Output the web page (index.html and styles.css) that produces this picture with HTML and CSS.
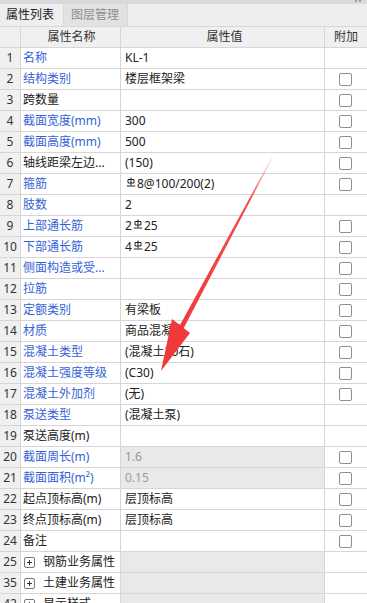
FILE: index.html
```html
<!DOCTYPE html>
<html lang="zh-CN">

<head>
    <meta charset="UTF-8">
    <title>属性列表</title>
    <link rel="stylesheet" href="styles.css">
</head>

<body>

    <div class="top-strip"><span class="grip"></span></div>

    <div class="tabs">
        <div class="tab active">属性列表</div>
        <div class="tab">图层管理</div>
    </div>

    <div class="grid">
        <div class="row head">
            <div class="cell idx"></div>
            <div class="cell name center">属性名称</div>
            <div class="cell value center">属性值</div>
            <div class="cell add center">附加</div>
        </div>

        <div class="row"><div class="cell idx">1</div><div class="cell name blue">名称</div><div class="cell value">KL-1</div><div class="cell add"></div></div>
        <div class="row"><div class="cell idx">2</div><div class="cell name blue">结构类别</div><div class="cell value">楼层框架梁</div><div class="cell add"><span class="check"></span></div></div>
        <div class="row"><div class="cell idx">3</div><div class="cell name">跨数量</div><div class="cell value"></div><div class="cell add"><span class="check"></span></div></div>
        <div class="row"><div class="cell idx">4</div><div class="cell name blue">截面宽度(mm)</div><div class="cell value">300</div><div class="cell add"><span class="check"></span></div></div>
        <div class="row"><div class="cell idx">5</div><div class="cell name blue">截面高度(mm)</div><div class="cell value">500</div><div class="cell add"><span class="check"></span></div></div>
        <div class="row"><div class="cell idx">6</div><div class="cell name">轴线距梁左边...</div><div class="cell value">(150)</div><div class="cell add"><span class="check"></span></div></div>
        <div class="row"><div class="cell idx">7</div><div class="cell name blue">箍筋</div><div class="cell value"><svg class="bar" viewBox="0 0 10 10"><path d="M5 0.5V8.5M2 2.5h6v3.5h-6zM0.8 9h8.4"/></svg>8@100/200(2)</div><div class="cell add"><span class="check"></span></div></div>
        <div class="row"><div class="cell idx">8</div><div class="cell name blue">肢数</div><div class="cell value">2</div><div class="cell add"></div></div>
        <div class="row"><div class="cell idx">9</div><div class="cell name blue">上部通长筋</div><div class="cell value">2<svg class="bar" viewBox="0 0 10 10"><path d="M5 0.5V8.5M2 2.5h6v3.5h-6zM0.8 9h8.4"/></svg>25</div><div class="cell add"><span class="check"></span></div></div>
        <div class="row"><div class="cell idx">10</div><div class="cell name blue">下部通长筋</div><div class="cell value">4<svg class="bar" viewBox="0 0 10 10"><path d="M5 0.5V8.5M2 2.5h6v3.5h-6zM0.8 9h8.4"/></svg>25</div><div class="cell add"><span class="check"></span></div></div>
        <div class="row"><div class="cell idx">11</div><div class="cell name blue">侧面构造或受...</div><div class="cell value"></div><div class="cell add"><span class="check"></span></div></div>
        <div class="row"><div class="cell idx">12</div><div class="cell name blue">拉筋</div><div class="cell value"></div><div class="cell add"><span class="check"></span></div></div>
        <div class="row"><div class="cell idx">13</div><div class="cell name blue">定额类别</div><div class="cell value">有梁板</div><div class="cell add"><span class="check"></span></div></div>
        <div class="row"><div class="cell idx">14</div><div class="cell name blue">材质</div><div class="cell value">商品混凝土</div><div class="cell add"><span class="check"></span></div></div>
        <div class="row"><div class="cell idx">15</div><div class="cell name blue">混凝土类型</div><div class="cell value">(混凝土20石)</div><div class="cell add"><span class="check"></span></div></div>
        <div class="row"><div class="cell idx">16</div><div class="cell name blue">混凝土强度等级</div><div class="cell value">(C30)</div><div class="cell add"><span class="check"></span></div></div>
        <div class="row"><div class="cell idx">17</div><div class="cell name blue">混凝土外加剂</div><div class="cell value">(无)</div><div class="cell add"><span class="check"></span></div></div>
        <div class="row"><div class="cell idx">18</div><div class="cell name blue">泵送类型</div><div class="cell value">(混凝土泵)</div><div class="cell add"></div></div>
        <div class="row"><div class="cell idx">19</div><div class="cell name">泵送高度(m)</div><div class="cell value"></div><div class="cell add"></div></div>
        <div class="row"><div class="cell idx">20</div><div class="cell name blue">截面周长(m)</div><div class="cell value locked">1.6</div><div class="cell add"><span class="check"></span></div></div>
        <div class="row"><div class="cell idx">21</div><div class="cell name blue">截面面积(m²)</div><div class="cell value locked">0.15</div><div class="cell add"><span class="check"></span></div></div>
        <div class="row"><div class="cell idx">22</div><div class="cell name">起点顶标高(m)</div><div class="cell value">层顶标高</div><div class="cell add"><span class="check"></span></div></div>
        <div class="row"><div class="cell idx">23</div><div class="cell name">终点顶标高(m)</div><div class="cell value">层顶标高</div><div class="cell add"><span class="check"></span></div></div>
        <div class="row"><div class="cell idx">24</div><div class="cell name">备注</div><div class="cell value"></div><div class="cell add"><span class="check"></span></div></div>
        <div class="row"><div class="cell idx">25</div><div class="cell name"><span class="plus"></span>钢筋业务属性</div><div class="cell value locked"></div><div class="cell add"></div></div>
        <div class="row"><div class="cell idx">35</div><div class="cell name"><span class="plus"></span>土建业务属性</div><div class="cell value locked"></div><div class="cell add"></div></div>
        <div class="row"><div class="cell idx">42</div><div class="cell name"><span class="plus"></span>显示样式</div><div class="cell value locked"></div><div class="cell add"></div></div>
    </div>

    <!-- annotation arrow drawn over the grid -->
    <svg class="arrow" width="367" height="603" viewBox="0 0 367 603">
        <defs>
            <linearGradient id="fade" x1="273" y1="156" x2="181" y2="328" gradientUnits="userSpaceOnUse">
                <stop offset="0" stop-color="#f03a3a" stop-opacity="0.05" />
                <stop offset="0.25" stop-color="#f03a3a" stop-opacity="0.9" />
                <stop offset="1" stop-color="#f03a3a" />
            </linearGradient>
        </defs>
        <polygon points="273.4,156.3 272.6,155.8 179.2,326.5 183.4,328.7" fill="url(#fade)" />
        <polygon points="172,319 190,333 161,371" fill="#f03a3a" />
    </svg>

</body>

</html>
```

FILE: styles.css
```css
body {
    margin: 0;
    background: #fff;
    font-family: "Noto Sans", "Noto Sans CJK SC", sans-serif;
    font-size: 12px;
    color: #222;
    position: relative;
    width: 367px;
    height: 603px;
    overflow: hidden;
}

.top-strip {
    height: 4px;
    background: #d9d9d9;
    position: relative;
}

.grip {
    position: absolute;
    right: 6px;
    top: 0;
    width: 6px;
    height: 2px;
    border-left: 2px solid #9a9a9a;
    border-right: 2px solid #9a9a9a;
    box-sizing: border-box;
}

.tabs {
    display: flex;
    height: 22px;
    background: #eeeeee;
    border-bottom: 1px solid #d6d6d6;
    box-sizing: content-box;
}

.tab {
    padding: 0 6px;
    line-height: 21px;
    font-size: 12px;
    color: #222;
    width: 64px;
    box-sizing: border-box;
}

.tab.active {
    width: 63px;
}

.tab:not(.active) {
    background: #e2e2e2;
    color: #8e8e8e;
    border-left: 1px solid #d8d8d8;
    border-right: 1px solid #d8d8d8;
    padding: 0 7px;
    width: 65px;
}

.row {
    display: grid;
    grid-template-columns: 21px 100px 204px 42px;
    height: 21px;
}

.cell {
    border-right: 1px solid #d6d6d6;
    border-bottom: 1px solid #d6d6d6;
    box-sizing: border-box;
    line-height: 20px;
    white-space: nowrap;
    overflow: hidden;
    display: flex;
    align-items: center;
}

.cell.add {
    border-right: none;
    justify-content: center;
}

.head .cell {
    background: #f0f0f0;
    color: #333;
}

.center {
    justify-content: center;
}

.idx {
    background: #f0f0f0;
    justify-content: center;
    color: #333;
    font-size: 12px;
}

.name {
    padding-left: 2px;
}

.value {
    padding-left: 4px;
}

.blue {
    color: #3563d6;
}

.locked {
    background: #e9e9e9;
    color: #9a9a9a;
}

.check {
    width: 13px;
    height: 13px;
    border: 1px solid #8f8f8f;
    border-radius: 2px;
    box-sizing: border-box;
    background: #fff;
    margin-left: -1px;
}

.plus {
    width: 11px;
    height: 11px;
    border: 1px solid #777;
    border-radius: 2px;
    box-sizing: border-box;
    margin: 0 8px 0 1px;
    position: relative;
}

.plus::before,
.plus::after {
    content: "";
    position: absolute;
    background: #333;
}

.plus::before {
    left: 2px;
    right: 2px;
    top: 4px;
    height: 1px;
}

.plus::after {
    top: 2px;
    bottom: 2px;
    left: 4px;
    width: 1px;
}

.bar {
    width: 10px;
    height: 10px;
    margin: -4px 1px 0 1px;
    fill: none;
    stroke: #222;
    stroke-width: 1;
}

.arrow {
    position: absolute;
    left: 0;
    top: 0;
    pointer-events: none;
}
```
